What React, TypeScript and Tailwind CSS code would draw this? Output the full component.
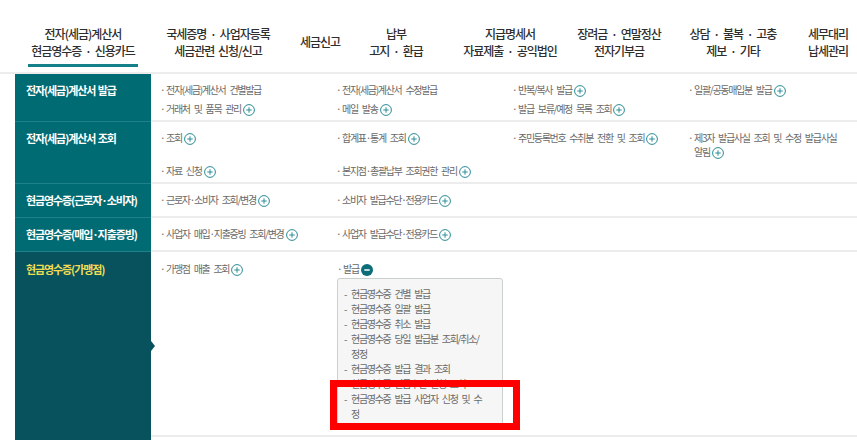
import React from "react";

const navItems = [
  { lines: ["전자(세금)계산서", "현금영수증 · 신용카드"], w: "w-[136px]", active: true },
  { lines: ["국세증명 · 사업자등록", "세금관련 신청/신고"], w: "w-[134px]" },
  { lines: ["세금신고"], w: "w-[70px]" },
  { lines: ["납부", "고지 · 환급"], w: "w-[82px]" },
  { lines: ["지급명세서", "자료제출 · 공익법인"], w: "w-[146px]" },
  { lines: ["장려금 · 연말정산", "전자기부금"], w: "w-[72px]" },
  { lines: ["상담 · 불복 · 고충", "제보 · 기타"], w: "w-[156px]" },
  { lines: ["세무대리", "납세관리"], w: "w-[34px]" },
];

type Item = { text: string; plus?: boolean };

const rows: { label: string; items: Item[] }[] = [
  {
    label: "전자(세금)계산서 발급",
    items: [
      { text: "전자(세금)계산서 건별발급" },
      { text: "전자(세금)계산서 수정발급" },
      { text: "반복/복사 발급", plus: true },
      { text: "일괄/공동매입분 발급", plus: true },
      { text: "거래처 및 품목 관리", plus: true },
      { text: "메일 발송", plus: true },
      { text: "발급 보류/예정 목록 조회", plus: true },
    ],
  },
  {
    label: "전자(세금)계산서 조회",
    items: [
      { text: "조회", plus: true },
      { text: "합계표·통계 조회", plus: true },
      { text: "주민등록번호 수취분 전환 및 조회", plus: true },
      { text: "제3자 발급사실 조회 및 수정 발급사실 알림", plus: true },
      { text: "자료 신청", plus: true },
      { text: "본지점·총괄납부 조회권한 관리", plus: true },
    ],
  },
  {
    label: "현금영수증(근로자·소비자)",
    items: [
      { text: "근로자·소비자 조회/변경", plus: true },
      { text: "소비자 발급수단·전용카드", plus: true },
    ],
  },
  {
    label: "현금영수증(매입·지출증빙)",
    items: [
      { text: "사업자 매입·지출증빙 조회/변경", plus: true },
      { text: "사업자 발급수단·전용카드", plus: true },
    ],
  },
];

const subMenu = [
  "현금영수증 건별 발급",
  "현금영수증 일괄 발급",
  "현금영수증 취소 발급",
  "현금영수증 당일 발급분 조회/취소/정정",
  "현금영수증 발급 결과 조회",
  "현금영수증 발급수단 신청 조회",
  "현금영수증 발급 사업자 신청 및 수정",
];

function PlusIcon() {
  return (
    <svg width="12" height="12" viewBox="0 0 12 12" className="inline-block align-[-3px] ml-[2px]">
      <circle cx="6" cy="6" r="5.4" fill="white" stroke="#2a8c96" strokeWidth="1" />
      <path d="M6 3.3v5.4M3.3 6h5.4" stroke="#2a8c96" strokeWidth="1" />
    </svg>
  );
}

function MinusIcon() {
  return (
    <svg width="12" height="12" viewBox="0 0 12 12" className="inline-block align-[-3px] ml-[2px]">
      <circle cx="6" cy="6" r="6" fill="#0b6d77" />
      <path d="M3.3 6h5.4" stroke="white" strokeWidth="1.5" />
    </svg>
  );
}

function MenuItem({ item }: { item: Item }) {
  return (
    <div className="flex pr-[20px]">
      <span className="w-[6px] shrink-0">·</span>
      <span>
        {item.text}
        {item.plus && <PlusIcon />}
      </span>
    </div>
  );
}

const textCls = "text-[10px] leading-[14px] tracking-[-1.3px] [word-spacing:3px] text-[#6a6a6a]";

export default function App() {
  return (
    <div className="relative w-[857px] h-[440px] overflow-hidden bg-white font-['Noto_Sans_CJK_KR','Noto_Sans',sans-serif] flex flex-col">
      {/* TOP NAV */}
      <header className="h-[74px] shrink-0 flex pl-[15px] border-b-2 border-[#ececec]">
        {navItems.map((n, i) => (
          <div key={i} className={`${n.w} shrink-0 flex flex-col items-center justify-center pt-[19px]`}>
            <div
              className={`flex flex-col items-center whitespace-nowrap pb-[5px] border-b-[3px] px-[3px] ${
                n.active ? "border-[#14808a]" : "border-transparent"
              }`}
            >
              {n.lines.map((l) => (
                <span
                  key={l}
                  className="text-[12px] leading-[17px] tracking-[-1px] [word-spacing:2px] font-medium text-[#2e2e2e]"
                >
                  {l}
                </span>
              ))}
            </div>
          </div>
        ))}
      </header>

      {/* MENU BODY */}
      <div className="flex-1 flex flex-col pl-[15px]">
        {rows.map((r) => (
          <div key={r.label} className="flex min-h-[34px]">
            <div className="w-[136px] shrink-0 bg-[#016b74] border-b border-[#20808a] pl-[11px] pt-[9px] text-white text-[11px] leading-[14px] font-bold tracking-[-1.1px] [word-spacing:1px]">
              {r.label}
            </div>
            <div className="flex-1 border-b-2 border-[#ececec] pl-[9px] pt-[9px] pb-[4px]">
              <div className={`grid grid-cols-[repeat(4,176px)] gap-y-[5px] ${textCls}`}>
                {r.items.map((it) => (
                  <MenuItem key={it.text} item={it} />
                ))}
              </div>
            </div>
          </div>
        ))}

        {/* selected row */}
        <div className="flex flex-1">
          <div className="relative w-[136px] shrink-0 bg-[#07525d] pl-[11px] pt-[10px] text-[#f2dc54] text-[11px] leading-[14px] font-bold tracking-[-1.1px]">
            현금영수증(가맹점)
            <span className="absolute right-[-4px] top-1/2 -translate-y-1/2 border-y-[5px] border-y-transparent border-l-[4px] border-l-[#07525d]" />
          </div>
          <div className="flex-1 mb-[3px] border-b-2 border-[#ececec] pl-[9px] pt-[10px]">
            <div className={`grid grid-cols-[repeat(4,176px)] ${textCls}`}>
              <MenuItem item={{ text: "가맹점 매출 조회", plus: true }} />
              <div className="pl-[1px]">
                <div className="flex">
                  <span className="w-[6px] shrink-0">·</span>
                  <span>
                    발급
                    <MinusIcon />
                  </span>
                </div>
                <div className="mt-[2px] w-[166px] h-[152px] border border-[#c9d0d0] rounded-[3px] bg-[#f6f6f6] pl-[6px] pr-[16px] pt-[7px]">
                  {subMenu.map((s) => (
                    <div key={s} className="flex leading-[15px]">
                      <span className="w-[7px] shrink-0">-</span>
                      <span>{s}</span>
                    </div>
                  ))}
                </div>
              </div>
            </div>
          </div>
        </div>
      </div>

      {/* annotation frame */}
      <div className="absolute left-[330px] top-[380px] w-[190px] h-[50px] border-[7px] border-[#ff0000]" />
    </div>
  );
}
